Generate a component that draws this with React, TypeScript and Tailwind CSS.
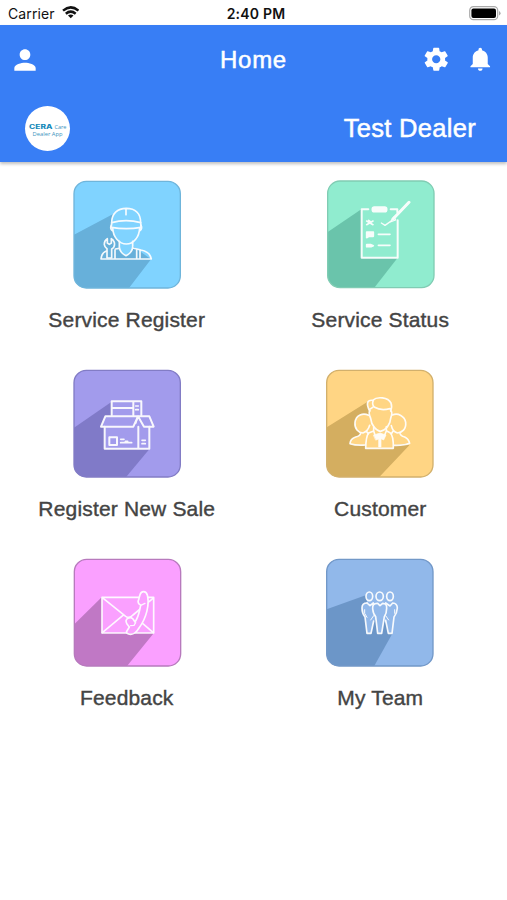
import React from 'react';
import { MdPerson } from 'react-icons/md';
import { IoMdSettings, IoMdNotifications } from 'react-icons/io';

interface TileProps {
  id: string;
  label: string;
  fill: string;
  shade: string;
  border: string;
  shadow: string;
  // outline of the icon that stays lit on top of the long shadow
  body: string;
  x?: number;
  y?: number;
  children: React.ReactNode;
}

const Tile: React.FC<TileProps> = ({ id, label, fill, shade, border, shadow, body, x = 21, y = 19, children }) => (
  <button type="button" className="flex h-[189px] flex-col items-center">
    <svg viewBox="0 0 360 360" className="ml-px size-[120px] shrink-0" fill="none">
      <clipPath id={id}>
        <rect x={x} y={y} width="319" height="320" rx="37" />
      </clipPath>
      <g clipPath={`url(#${id})`}>
        <rect width="360" height="360" fill={fill} />
        <path d={shadow} fill={shade} />
        <path d={body} fill={fill} />
      </g>
      <rect x={x} y={y} width="319" height="320" rx="37" stroke={border} strokeWidth="4" />
      <g stroke="#fff" strokeWidth="5" strokeLinejoin="round" strokeLinecap="round" opacity="0.93">
        {children}
      </g>
    </svg>
    <span className="mt-[12px] whitespace-nowrap text-[21px] leading-[26px] tracking-[0.17px] text-[#444] [-webkit-text-stroke:0.4px_#444]">
      {label}
    </span>
  </button>
);

const WorkerIcon = () => (
  <>
    <path d="M134 143C134 116 151 100 178 100S221 116 221 143M177 102V119" />
    <path d="M134 143Q177 131 221 143L222 157Q178 165 133 157Z" />
    <path d="M133 150Q128 160 136 167M222 150Q227 160 219 167M137 158C138 187 157 207 178 207S217 187 218 158" />
    <path d="M157 199V216Q158 233 177 242Q196 233 197 216V199" />
    <path d="M157 220L145 222M118 228Q104 233 102 252H253Q249 230 222 225L197 219M144 225V251M209 223V251M219 225V251" />
    <path d="M120 225V249H134V222Q145 217 142 202Q139 194 133 191V204L127 208L121 204V191Q111 197 112 209Q113 217 120 221Z" />
  </>
);

const ChecklistIcon = () => (
  <>
    <path d="M142 103H122V248H230V136M209 103H229V112" strokeWidth="6" />
    <rect x="154" y="96" width="43" height="14" rx="6" fill="#fff" />
    <path d="M264 82L216 132" strokeWidth="9" />
    <path d="M219 126L208 141L224 135ZM181 144L192 151L208 140" strokeWidth="4" />
    <path d="M137 138L156 149M137 149L156 138M143 136L148 140M172 178H207M172 211H207" strokeWidth="5" />
    <path d="M137 171H157V184H144L137 188ZM137 209H150L157 212L150 215H137Z" fill="#fff" />
  </>
);

const BoxIcon = () => (
  <g strokeWidth="6">
    <path d="M134 154V112H223V154M199 112V154M136 132H198M113 188V254H247V188M214 188V254" />
    <path d="M115 157H213L199 188H102ZM213 157H247L260 188H231Z" />
    <path d="M213 157L206 178M206 126H214M206 137H214M161 226H171M161 236H194M175 232H182M225 229H235M225 239H235" strokeWidth="5" />
    <rect x="127" y="220" width="23" height="23" />
  </g>
);

const PeopleIcon = () => (
  <>
    <path d="M146 141C134 118 139 107 155 109C169 96 201 100 210 117Q214 127 209 141M157 109Q151 122 161 130Q179 141 207 134M145 137L155 130" />
    <path d="M147 140C141 145 146 155 149 163C151 184 166 201 178 202C195 199 208 181 209 163C212 155 216 145 209 140" />
    <path d="M158 188V201L143 207Q135 216 134 253H217Q218 215 207 206L196 200V188M158 201L164 218M196 201L189 218" />
    <path d="M158 213L177 207L195 213L188 228L180 224V249H173V225L165 228Z" fill="#fff" strokeWidth="2" />
    <path d="M143 154C126 145 105 153 102 175C100 194 112 206 126 207Q141 202 146 184M119 207Q118 216 104 219Q88 224 87 239Q105 245 133 243M214 153C231 146 251 156 254 175C256 196 243 206 229 207Q215 203 211 185M237 207Q238 216 251 219Q263 225 266 238Q250 245 218 244M136 202L142 209M217 200L211 209" />
  </>
);

const MailIcon = ({ fill }: { fill: string }) => (
  <>
    <rect x="105" y="133" width="155" height="107" />
    <path d="M106 134L176 190Q187 198 198 186L258 136M106 239L168 187M259 239L224 209" />
    <path
      d="M219 125C223 112 237 113 241 126C248 154 239 194 216 225C208 239 195 248 183 242Q175 239 181 232L187 222L180 213Q173 201 183 196Q192 191 198 198L204 207Q213 194 218 171L221 157Q211 151 214 143Z"
      fill={fill}
    />
    <path d="M191 218L201 217L206 209M221 157L234 151" strokeWidth="4" />
  </>
);

const TeamIcon = () => (
  <>
    <ellipse cx="145" cy="130" rx="10" ry="13" />
    <ellipse cx="176" cy="130" rx="11" ry="13" />
    <ellipse cx="207" cy="130" rx="10" ry="13" />
    <path d="M138 150Q123 150 123 165Q123 181 132 192L138 241H150L158 204" />
    <path d="M138 150L147 158L157 150M170 151Q153 150 155 168Q157 184 164 191L170 241H182L190 191Q197 181 197 166Q198 151 185 151L177 158Z" />
    <path d="M194 150L207 159L215 150Q229 151 229 165Q228 181 219 192L213 241H202L194 202" />
    <path d="M131 170V181L138 193M221 170V181M149 201L158 188M203 201L194 188" strokeWidth="3" />
  </>
);

const StatusBar = () => (
  <div className="grid h-[25px] grid-cols-3 items-center bg-white px-2 font-[Inter,sans-serif] text-[#111]">
    <div className="flex items-center gap-[7px] pt-[2px]">
      <span className="text-[14px] leading-5 tracking-[0.1px]">Carrier</span>
      <svg viewBox="0 0 17 12" className="mb-[2px] h-[12.5px] w-[17.5px]" fill="none" stroke="#111" strokeWidth="2.4">
        <path d="M1 4.4Q8.5-1.9 16 4.4M3.7 7.4Q8.5 3.4 13.3 7.4" />
        <path d="M5.8 9.2Q8.5 7.1 11.2 9.2L8.5 11.9Z" fill="#111" stroke="none" />
      </svg>
    </div>
    <span className="pt-[2px] pl-[5px] text-center text-[14px] font-semibold leading-5 tracking-[0.2px] whitespace-nowrap">2:40 PM</span>
    <svg viewBox="0 0 32 15" className="mt-px -mr-[2px] h-[15px] w-[32px] justify-self-end">
      <rect x="0.7" y="0.7" width="28" height="13" rx="3.7" fill="#fff" stroke="#aaa" strokeWidth="1.2" />
      <rect x="2.4" y="2.4" width="24.6" height="9.6" rx="2" fill="#000" />
      <path d="M30 5V9.5Q31.6 8.5 31.6 7.2T30 5" fill="#aaa" />
    </svg>
  </div>
);

const Logo = () => (
  <svg viewBox="0 0 45 45" className="size-[45px] rounded-full bg-white">
    <text x="4" y="23.4" textLength="23.5" lengthAdjust="spacingAndGlyphs" fontFamily="Inter" fontWeight="800" fontSize="5.6" fill="#168aba">
      CERA
    </text>
    <text x="29.5" y="23.4" textLength="12" lengthAdjust="spacingAndGlyphs" fontFamily="Open Sans" fontSize="6" fill="#3b94bd">
      Care
    </text>
    <text x="7.5" y="29.8" textLength="30" lengthAdjust="spacingAndGlyphs" fontFamily="Open Sans" fontSize="5.4" fill="#3b94bd">
      Dealer App
    </text>
  </svg>
);

export default function App() {
  return (
    <div className="h-[900px] w-[507px] overflow-hidden bg-white font-['Liberation_Sans',sans-serif]">
      <StatusBar />
      <header className="h-[137px] bg-[#387ef5] text-white shadow-[0_2px_3px_rgba(0,0,0,0.25)]">
        <div className="grid h-[69px] grid-cols-3 items-center">
          <MdPerson className="ml-[9px] size-8" />
          <h1 className="text-center text-[24px] leading-8 tracking-[0.7px] [-webkit-text-stroke:0.5px_white]">Home</h1>
          <div className="flex items-center justify-end gap-[15px] pr-[13px]">
            <IoMdSettings className="size-[28.5px]" />
            <IoMdNotifications className="size-[28.5px]" />
          </div>
        </div>
        <div className="flex h-[68px] items-center justify-between pr-[31px] pl-[25px]">
          <Logo />
          <span className="text-[25.5px] leading-8 tracking-[0.3px] [-webkit-text-stroke:0.5px_white]">Test Dealer</span>
        </div>
      </header>
      <main className="grid grid-cols-2 pt-[13px]">
        <Tile id="register" label="Service Register" fill="#80d3ff" shade="#67b0da" border="#6fb5db" shadow="M137 118L0 190V360H170L252 253L180 200Z" body="M134 143C134 116 151 100 178 100S221 116 221 143L218 158C217 187 197 205 197 205V216Q196 233 177 242Q158 233 157 216V200Q138 185 137 158Z">
          <WorkerIcon />
        </Tile>
        <Tile id="status" label="Service Status" fill="#90eccf" shade="#6ac4ab" border="#80ccb3" shadow="M122 102L0 185V360H143L230 248Z" body="M122 103H230V248H122Z" x={20} y={18}>
          <ChecklistIcon />
        </Tile>
        <Tile id="sale" label="Register New Sale" fill="#a29bec" shade="#807ac8" border="#827cc5" shadow="M133 114L0 206V360H160L248 254Z" body="M134 112H223V157H247L260 188H247V254H113V188H102L115 157H134Z">
          <BoxIcon />
        </Tile>
        <Tile id="customer" label="Customer" fill="#ffd584" shade="#d4ae60" border="#d2b06c" shadow="M140 113L0 201V360H155L265 244L180 190Z" body="M146 141C134 118 139 107 155 109C169 96 201 100 210 117L214 153C231 146 251 156 254 175C256 196 243 206 237 207Q238 216 251 219Q263 225 266 238L217 244V253H134V243L87 239Q88 224 104 219Q118 216 119 207C112 206 100 194 102 175C105 153 126 145 146 154Z" x={17}>
          <PeopleIcon />
        </Tile>
        <Tile id="feedback" label="Feedback" fill="#faa0ff" shade="#c078c5" border="#b77abd" shadow="M104 133L0 235V360H163L260 241Z" body="M105 133H260V240H105Z" x={22}>
          <MailIcon fill="#faa0ff" />
        </Tile>
        <Tile id="team" label="My Team" fill="#91b8ea" shade="#6c96c8" border="#7298c8" shadow="M134 127L0 175V360H148L215 240Z" body="M138 150Q123 150 123 165Q123 181 132 192L138 241H150L158 204L164 200L170 241H182L190 200L194 202L202 241H213L219 192Q228 181 229 165Q229 151 215 150V118H135Z" x={17}>
          <TeamIcon />
        </Tile>
      </main>
    </div>
  );
}
